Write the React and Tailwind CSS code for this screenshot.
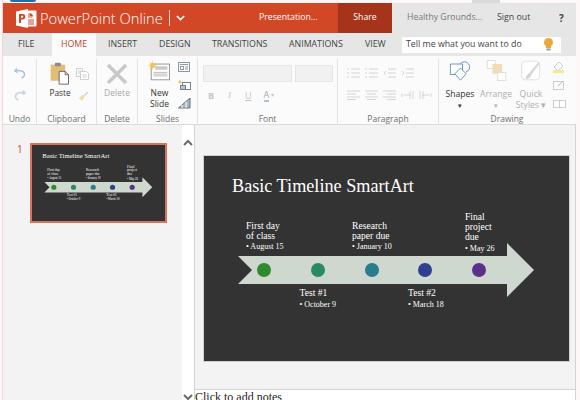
import React from "react";

const UI = { fontFamily: '"Open Sans", "Noto Sans", sans-serif' };
const SERIF = { fontFamily: '"Liberation Serif", "DejaVu Serif", serif' };

function Logo() {
  return (
    <svg width="21" height="19" viewBox="0 0 21 19" className="shrink-0">
      <rect x="8" y="1.5" width="12.5" height="16" rx="1" fill="#fff" />
      <rect x="11" y="4" width="6" height="5" rx="2.5" fill="#e9a48f" />
      <path d="M14 4v3h3" fill="#d24726" />
      <path d="M11 11h7M11 13h7M11 15h7" stroke="#d24726" strokeWidth="1" />
      <path d="M0 2.5 12 0v19L0 16.5z" fill="#fff" />
      <path d="M3 5h3.6a2.7 2.7 0 0 1 0 5.4H5V14H3zM5 6.7v2h1.3a1 1 0 0 0 0-2z" fill="#d24726" />
    </svg>
  );
}

const Undo = ({ flip }) => (
  <svg width="12" height="12" viewBox="0 0 12 12" className={flip ? "-scale-x-100" : ""}>
    <path d="M3 1.5.9 4 3.6 5.6M1.3 4.2C6 2.7 10.5 4 10.5 7.5c0 2-1.300 3-3 3.5" fill="none" stroke={flip ? "#c5d3de" : "#a9c4da"} strokeWidth="1.400" />
  </svg>
);

const Clip = () => (
  <svg width="22" height="23" viewBox="0 0 24 27">
    <path d="M1 3h17v19H1z" fill="#e4bd74" />
    <rect x="6" y="1" width="7" height="4" rx="1" fill="#8b8b8b" />
    <path d="M11 11h7l4 4v11H11z" fill="#fff" stroke="#555" strokeWidth="1" />
    <path d="M18 11v4h4" fill="none" stroke="#555" strokeWidth="1" />
  </svg>
);

const Copy = () => (
  <svg width="13" height="12" viewBox="0 0 13 12" fill="none" stroke="#cfcfcf">
    <path d="M.5.500h6v8h-6z" /><path d="M4.500 3.500h6l2 2v6h-8z" fill="#fff" /><path d="M2 3h3M2 5h2M6.500 7h4M6.500 9h4" />
  </svg>
);

const Brush = () => (
  <svg width="12" height="11" viewBox="0 0 12 12">
    <path d="m6 4 2 2-3 4.500L1.500 8z" fill="#ecd9ae" />
    <path d="m7 4.500 3.500-3.500 1 1L8 5.500z" fill="#c9c9c9" />
  </svg>
);

const NewSlide = () => (
  <svg width="23" height="21" viewBox="0 0 26 24">
    <rect x="3.500" y="3.500" width="21" height="18" fill="#fff" stroke="#8b8b8b" />
    <rect x="8" y="6" width="14" height="4" fill="#c9c9c9" />
    <path d="M6 13h16M6 15h16M6 17h16" stroke="#b5b5b5" />
    <circle cx="5" cy="5" r="3" fill="#ecc667" />
    <path d="M5 0v10M0 5h10M1.500 1.500l7 7M8.500 1.500l-7 7" stroke="#ecc667" strokeWidth=".8" />
  </svg>
);

const SlideSmall = ({ kind }) => (
  <svg width="13" height="12" viewBox="0 0 13 12">
    {kind === 0 && (<g fill="none" stroke="#8b9aa5"><rect x=".5" y="1.500" width="11" height="9" /><path d="M2 3.500h8" /><rect x="2.500" y="5.500" width="3" height="3" /><path d="M7 6h3M7 8h3" /></g>)}
    {kind === 1 && (<g><path d="M2 1l2 2-2 2-2-2z" fill="#ecc667" /><rect x="4.500" y="3.500" width="8" height="7" fill="#fff" stroke="#72838f" /><rect x="2.500" y="6.500" width="5" height="4" fill="#b5c6d2" stroke="#72838f" /></g>)}
    {kind === 2 && (<g><path d="M.5 11 12 1v10z" fill="#a9b9c4" stroke="#5f707c" /><path d="M4 11V8M8 11V5" stroke="#fff" /></g>)}
  </svg>
);

function Group({ w, label, children, last }) {
  return (
    <div className={`mt-[3px] flex h-[65px] shrink-0 flex-col ${last ? "" : "border-r border-[#e3e3e3]"}`} style={{ width: w }}>
      <div className="flex min-h-0 flex-1">{children}</div>
      <div className="h-[11px] text-center text-[8.500px] leading-[11px] text-[#6e6e6e]">{label}</div>
    </div>
  );
}

const ParaIcon = ({ d }) => (
  <svg width="13" height="10" viewBox="0 0 13 10" fill="none" stroke="#d4d4d4"><path d={d} /></svg>
);

const Shapes = () => (
  <svg width="23" height="21" viewBox="0 0 27 26" fill="none" stroke="#4a82b4" strokeWidth="1">
    <path d="M13 5a6.500 6.500 0 1 1 7 10" />
    <path d="M1 5h15v13H1z" fill="#fff" />
    <path d="m13.500 10 7 7-7 8-7-8z" fill="#fff" />
  </svg>
);
const Arrange = () => (
  <svg width="23" height="21" viewBox="0 0 26 26">
    <rect x="1.500" y=".5" width="10" height="10" fill="#fff" stroke="#d8d8d8" />
    <rect x="8" y="5" width="12" height="12" fill="#f1dcb7" />
    <rect x="14.500" y="15.500" width="10" height="10" fill="#fff" stroke="#d8d8d8" />
  </svg>
);
const Quick = () => (
  <svg width="22" height="21" viewBox="0 0 26 26">
    <rect x="1.500" y="1.500" width="22" height="23" rx="5" fill="#fff" stroke="#d8d8d8" />
    <path d="M24 4 12 20l-3 3c-2 1-3 0-2-3l3-3L22 3z" fill="#d8d8d8" />
    <path d="m10 17 3 3-3 3c-2 1-3 0-3-2z" fill="#c7d6e2" />
  </svg>
);

function Timeline({ f }) {
  const cols = ["#2f8a2f", "#2a8a60", "#2a7d8c", "#2f3f8f", "#5c2f8a"];
  const cx = [60, 114, 168, 221, 275];
  return (
    <div className="relative h-full w-full overflow-hidden bg-[#333333] text-white" style={SERIF}>
      <svg viewBox="0 0 365 205" preserveAspectRatio="none" className="absolute inset-0 h-full w-full">
        <path d="M34 100h269V87l27 27-27 27v-13H34l14-14z" fill="#cfd8cf" />
        {cx.map((x, i) => <circle key={x} cx={x} cy="114" r="7" fill={cols[i]} />)}
      </svg>
      <div className="absolute whitespace-nowrap" style={{ left: `${(28 / 365) * 100}%`, top: `${(20 / 205) * 100}%`, fontSize: 18.2 * f, lineHeight: 1.2 }}>
        Basic Timeline SmartArt
      </div>
      {[
        { l: 42, t: 65, m: 1, a: "First day", b: "of class", d: "August 15" },
        { l: 148, t: 65, m: 1, a: "Research", b: "paper due", d: "January 10" },
        { l: 261, t: 56, m: 2, a: "Final", b: "project", c: "due", d: "May 26" },
        { l: 95.5, t: 132, m: 2, a: "Test #1", d: "October 9" },
        { l: 204, t: 132, m: 2, a: "Test #2", d: "March 18" },
      ].map((it) => (
        <div
          key={it.a}
          className="absolute whitespace-nowrap"
          style={{ left: `${(it.l / 365) * 100}%`, top: `${(it.t / 205) * 100}%`, fontSize: 9.6 * f, lineHeight: 1.04 }}
        >
          <div>{it.a}</div>
          {it.b && <div>{it.b}</div>}
          {it.c && <div>{it.c}</div>}
          <div style={{ fontSize: 8 * f, lineHeight: 1.25, marginTop: it.m * f }}>• {it.d}</div>
        </div>
      ))}
    </div>
  );
}

export default function App() {
  return (
    <div className="relative flex h-[400px] w-[580px] flex-col overflow-hidden bg-[#fdf7f7] pl-[3px] pr-[4px] pt-[3px]" style={UI}>
      <div className="absolute left-[10px] top-0 h-[2px] w-[26px] rounded-b-full bg-[#1f6fb5]" />
      <div className="absolute left-[472px] top-0 h-[3px] w-[28px] bg-[#d9d9d9]" />
      <div className="absolute left-[2px] top-0 h-full w-px bg-[#f1d5da]" />

      <div className="flex h-[30px] shrink-0 items-center bg-[#e6e6e6]">
        <div className="flex h-full w-[335px] items-center bg-[#d24726] pl-[13px] text-white">
          <Logo />
          <span className="ml-[3px] w-[121px] whitespace-nowrap text-[14.700px] font-light">PowerPoint Online</span>
          <span className="ml-[8px] h-[16px] w-px bg-white/80" />
          <svg width="9" height="6" viewBox="0 0 11 7" className="ml-[6px]"><path d="m1 1 4.500 4.500L10 1" fill="none" stroke="#fff" strokeWidth="2" /></svg>
          <span className="ml-[74px] text-[8.700px] font-medium">Presentation...</span>
        </div>
        <div className="flex h-full w-[54px] items-center justify-center bg-[#a5341a] text-[8.700px] font-medium text-white">Share</div>
        <span className="ml-[15px] w-[90px] whitespace-nowrap text-[8.700px] text-[#777]">Healthy Grounds...</span>
        <span className="w-[62px] text-[8.800px] text-[#444]">Sign out</span>
        <span className="text-[10px] font-bold text-[#444]">?</span>
      </div>

      <div className="flex h-[23px] shrink-0 items-center bg-[#e6e6e6] text-[8.800px] text-[#444]">
        <div className="w-[49px] pl-[15px]">FILE</div>
        <div className="flex h-full w-[44px] items-center justify-center bg-[#fbfbfb] text-[#c0472a]">HOME</div>
        <div className="ml-[12px] w-[51px]">INSERT</div>
        <div className="w-[53px]">DESIGN</div>
        <div className="w-[77px]">TRANSITIONS</div>
        <div className="w-[76px]">ANIMATIONS</div>
        <div className="w-[37px]">VIEW</div>
        <div className="flex h-[16px] w-[159px] items-center justify-between bg-white pl-[4px] pr-[8px] text-[8.800px]">
          <span>Tell me what you want to do</span>
          <svg width="9" height="13" viewBox="0 0 9 13"><path d="M4.500 0a4.500 4.500 0 0 1 2.500 8.200V10H2V8.200A4.500 4.500 0 0 1 4.500 0z" fill="#e9a93a" /><rect x="2.500" y="10.500" width="4" height="2" fill="#999" /></svg>
        </div>
      </div>

      <div className="flex h-[69px] shrink-0 border-b border-[#dcdcdc] bg-[#fbfbfb]">
        <Group w={34} label="Undo">
          <div className="flex w-full flex-col items-center gap-[10px] pt-[8px]"><Undo /><Undo flip /></div>
        </Group>
        <Group w={60} label="Clipboard">
          <div className="flex w-[39px] flex-col items-center pl-[7px] pt-[3px]">
            <Clip />
            <span className="mt-[1px] text-[8.300px] leading-[14px] text-[#333]">Paste</span>
          </div>
          <div className="flex flex-col items-center gap-[11px] pt-[9px]"><Copy /><Brush /></div>
        </Group>
        <Group w={41} label="Delete">
          <div className="flex w-full flex-col items-center pt-[4px]">
            <svg width="22" height="22" viewBox="0 0 22 22"><path d="M2 2l18 18M20 2 2 20" stroke="#c8c8c8" strokeWidth="3.500" /></svg>
            <span className="mt-[1px] text-[8.600px] leading-[14px] text-[#aaa]">Delete</span>
          </div>
        </Group>
        <Group w={60} label="Slides">
          <div className="flex w-[40px] flex-col items-center pl-[3px] pt-[2px] text-[8.500px] leading-[11px] text-[#333]">
            <NewSlide /><span className="mt-[5px]">New</span><span>Slide</span>
          </div>
          <div className="flex flex-col items-center gap-[6px] pt-[2px]"><SlideSmall kind={0} /><SlideSmall kind={1} /><SlideSmall kind={2} /></div>
        </Group>
        <Group w={140} label="Font">
          <div className="flex w-full flex-col gap-[7px] pl-[5px] pt-[6px]">
            <div className="flex gap-[3px]">
              <div className="h-[17px] w-[89px] border border-[#e6e6e6] bg-[#f1f1f1]" />
              <div className="h-[17px] w-[38px] border border-[#e6e6e6] bg-[#f1f1f1]" />
            </div>
            <div className="flex items-center gap-[14px] pl-[5px] text-[9px] text-[#c4c4c4]">
              <b>B</b><i style={{ fontFamily: "serif" }}>I</i><u>U</u>
              <span className="-ml-[2px] flex items-center gap-[2px]"><span className="border-b-2 border-[#a9c4da] leading-[10px] text-[#a9a9a9]">A</span><span className="text-[6px]">▾</span></span>
            </div>
          </div>
        </Group>
        <Group w={101} label="Paragraph">
          <div className="flex w-full flex-col gap-[12px] pl-[9px] pt-[9px]">
            <div className="flex gap-[5px]">
              <ParaIcon d="M0 1h2M4 1h9M0 5h2M4 5h9M0 9h2M4 9h9" />
              <ParaIcon d="M0 1h2M4 1h9M0 5h2M4 5h9M0 9h2M4 9h9" />
              <ParaIcon d="M5 1h8M5 5h8M5 9h8M3 3 1 5l2 2" />
              <ParaIcon d="M5 1h8M5 5h8M5 9h8M1 3l2 2-2 2" />
            </div>
            <div className="flex gap-[5px]">
              <ParaIcon d="M0 1h13M0 4h9M0 7h13M0 9.500h9" />
              <ParaIcon d="M0 1h13M2 4h9M0 7h13M2 9.500h9" />
              <ParaIcon d="M0 1h13M4 4h9M0 7h13M4 9.500h9" />
              <ParaIcon d="M1 3v4M3 5h7M9 1v8M12 1v8" />
              <ParaIcon d="M12 3v4M10 5H3M4 1v8M1 1v8" />
            </div>
          </div>
        </Group>
        <Group w={136} label="Drawing" last>
          <div className="flex w-[36px] flex-col items-center pl-[6px] pt-[1px] text-[8.600px] leading-[11px] text-[#333]">
            <Shapes /><span className="mt-[8px]">Shapes</span><span className="text-[7px]">▾</span>
          </div>
          <div className="flex w-[36px] flex-col items-center pl-[6px] pt-[1px] text-[8.600px] leading-[11px] text-[#b0b0b0]">
            <Arrange /><span className="mt-[8px]">Arrange</span><span className="text-[7px]">▾</span>
          </div>
          <div className="flex w-[36px] flex-col items-center pl-[4px] pt-[1px] text-[8.600px] leading-[11px] text-[#b0b0b0]">
            <Quick /><span className="mt-[8px]">Quick</span><span className="whitespace-nowrap">Styles ▾</span>
          </div>
          <div className="flex flex-col items-center gap-[6px] pl-[6px] pt-[2px]">
            <svg width="13" height="12" viewBox="0 0 13 12"><path d="M6 1 1 6l4 4 5-5z" fill="#fff" stroke="#bcd0df" /><rect x="0" y="9" width="11" height="3" fill="#f5e98b" /></svg>
            <svg width="13" height="11" viewBox="0 0 13 11" fill="none" stroke="#cfcfcf"><rect x=".5" y="2.500" width="10" height="8" /><path d="m5 7 5-5" stroke="#bbb" /></svg>
            <svg width="13" height="12" viewBox="0 0 13 12" fill="#fff" stroke="#cfcfcf"><rect x=".5" y="4.500" width="6" height="7" /><rect x="6.500" y="4.500" width="6" height="7" /></svg>
          </div>
        </Group>
      </div>

      <div className="flex min-h-0 flex-1">
        <div className="flex h-full w-[179px] shrink-0 items-start bg-[#f3f3f3] pl-[14px] pt-[18px]">
          <span className="w-[13px] text-[10px] leading-[12px] text-[#d24726]">1</span>
          <div className="h-[80px] w-[137px] border-[2px] border-[#d9745c] bg-[#333]">
            <Timeline f={0.37} />
          </div>
        </div>
        <div className="flex h-full w-[12px] shrink-0 flex-col items-center justify-between bg-white pt-[14px]">
          <svg width="10" height="7" viewBox="0 0 10 7"><path d="m1 6 4-4 4 4" fill="none" stroke="#6b6b6b" strokeWidth="2" /></svg>
          <svg width="10" height="7" viewBox="0 0 10 7" className="mb-[-1px]"><path d="m1 1 4 4 4-4" fill="none" stroke="#6b6b6b" strokeWidth="2" /></svg>
        </div>
        <div className="flex h-full min-w-0 flex-1 flex-col border-x border-[#d4d4d4] bg-white">
          <div className="h-[265px] shrink-0 border-b border-[#d4d4d4] bg-[#f3f3f3] pl-[8px] pt-[30px]">
            <div className="h-[207px] w-[367px] border border-[#cfcfcf]">
              <Timeline f={1} />
            </div>
          </div>
          <div className="text-[12px] leading-[14px] text-[#222]" style={{ fontFamily: '"Liberation Serif", serif' }}>Click to add notes</div>
        </div>
      </div>
    </div>
  );
}
